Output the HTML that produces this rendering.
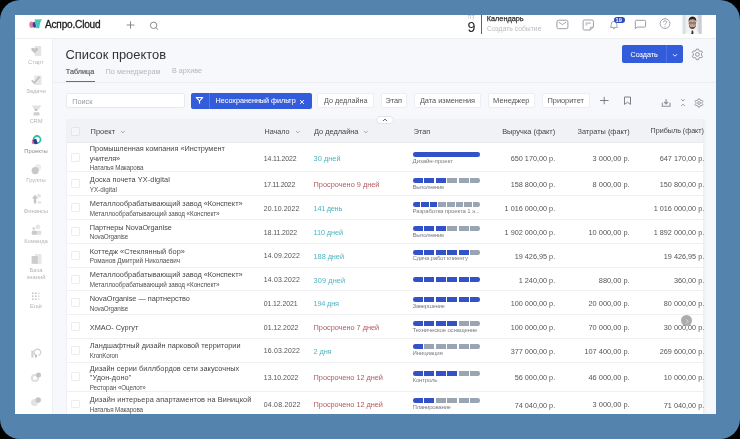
<!DOCTYPE html>
<html><head><meta charset="utf-8"><style>
html,body{margin:0;padding:0}
body{width:740px;height:439px;overflow:hidden;background:#000;position:relative;font-family:"Liberation Sans",sans-serif}
#frame{position:absolute;left:0;top:0;width:740px;height:439px;border-radius:20px;background:#5484ad}
#win{position:absolute;left:15px;top:15px;width:701px;height:399px;background:#fff;overflow:hidden}
.t{position:absolute;white-space:nowrap;line-height:normal}
#win{will-change:transform}
.r{position:absolute;display:block}
</style></head><body><div id="frame"></div><div id="win">
<div class="r" style="left:38.00px;top:23.00px;width:663.00px;height:376.00px;background:#f7f8fb"></div>
<div class="r" style="left:0.00px;top:23.00px;width:38.00px;height:376.00px;background:#fff;border-right:1px solid #eef0f3;box-sizing:border-box"></div>
<div class="r" style="left:0.00px;top:0.00px;width:701.00px;height:24.00px;background:#fff;border-bottom:1px solid #eceef1;box-sizing:border-box"></div>
<svg class="r" style="left:13.00px;top:3.00px" width="16" height="12" viewBox="0 0 16 12"><ellipse cx="3.5" cy="6.7" rx="2.2" ry="3.1" fill="#d97ea4"/><ellipse cx="6.7" cy="6.8" rx="2.0" ry="3.0" fill="#3a3f9c"/><path d="M6.4 1.6 L14 1.3 Q11.8 4 11.3 10.2 L8.8 10.2 Q8.2 5 6.4 1.6Z" fill="#45c7ad"/><path d="M7.6 3.4 Q9 6.5 9.2 10.2 L8.2 10.2 Q7.8 6.6 6.9 4.6Z" fill="#5fc7e6"/></svg>
<div class="t" style="left:30.00px;top:4.36px;font-size:10.1px;color:#222;font-weight:400;-webkit-text-stroke:0.3px #222;letter-spacing:-0.204px;">Аспро.Cloud</div>
<svg class="r" style="left:111.00px;top:5.80px" width="9" height="8" viewBox="0 0 9 8"><path d="M4.5 0.3V7.7M0.7 4H8.3" stroke="#7c7f86" stroke-width="0.9" fill="none"/></svg>
<svg class="r" style="left:134.00px;top:5.50px" width="10" height="9" viewBox="0 0 10 9"><circle cx="4.6" cy="4.3" r="3.2" stroke="#7c7f86" stroke-width="0.9" fill="none"/><path d="M6.9 6.6L9 8.6" stroke="#7c7f86" stroke-width="0.9"/></svg>
<div class="t" style="left:452.60px;top:-1.28px;font-size:5.5px;color:#bbb;font-weight:400;;">ПТ</div>
<div class="t" style="left:452.40px;top:3.76px;font-size:14.3px;color:#2a2a2a;font-weight:400;;">9</div>
<div class="r" style="left:465.50px;top:0.00px;width:1.40px;height:18.60px;background:#4f6784"></div>
<div class="t" style="left:471.80px;top:-1.00px;font-size:7.29px;color:#333;font-weight:400;-webkit-text-stroke:0.25px #333;">Календарь</div>
<div class="t" style="left:472.00px;top:10.05px;font-size:6.8px;color:#b9bcc2;font-weight:400;;">Создать событие</div>
<svg class="r" style="left:541.00px;top:4.00px" width="13" height="11" viewBox="0 0 13 11"><rect x="0.9" y="1.2" width="11" height="8.5" rx="1.6" stroke="#9a9da3" stroke-width="1" fill="none"/><path d="M2.6 3.1L6.4 5.6L10.2 3.1" stroke="#9a9da3" stroke-width="0.9" fill="none"/></svg>
<svg class="r" style="left:566.50px;top:3.50px" width="13" height="12" viewBox="0 0 13 12"><path d="M2.3 1H10.2Q11.4 1 11.4 2.2V8.2L8.2 11H2.3Q1.1 11 1.1 9.8V2.2Q1.1 1 2.3 1Z" stroke="#9a9da3" stroke-width="1" fill="none"/><path d="M3.5 4.1H8.9M3.5 5.9H5.3" stroke="#9a9da3" stroke-width="0.9"/><path d="M8.3 10.8V8.8Q8.3 8.2 8.9 8.2H11.2" stroke="#9a9da3" stroke-width="0.9" fill="none"/></svg>
<svg class="r" style="left:594.00px;top:4.00px" width="10" height="11" viewBox="0 0 10 11"><path d="M1.4 8.4Q2.3 7.4 2.3 5.3Q2.3 2.2 5 2.2Q7.7 2.2 7.7 5.3Q7.7 7.4 8.6 8.4Z" stroke="#9a9da3" stroke-width="0.9" fill="none"/><path d="M4 9.4Q5 10.6 6 9.4" stroke="#9a9da3" stroke-width="0.9" fill="none"/></svg>
<div class="r" style="left:598.70px;top:1.70px;width:11.30px;height:6.40px;background:#2c49bd;border-radius:4px"></div>
<div class="t" style="left:600.60px;top:2.13px;font-size:5.6px;color:#fff;font-weight:700;;">19</div>
<svg class="r" style="left:618.50px;top:3.50px" width="13" height="11" viewBox="0 0 13 11"><path d="M1.3 9.8V2.3Q1.3 1.3 2.3 1.3H10.6Q11.6 1.3 11.6 2.3V7.1Q11.6 8.1 10.6 8.1H3.1Z" stroke="#9a9da3" stroke-width="1" fill="none"/></svg>
<svg class="r" style="left:644.00px;top:3.00px" width="12" height="12" viewBox="0 0 12 12"><circle cx="6" cy="5.6" r="4.9" stroke="#9a9da3" stroke-width="0.95" fill="none"/><path d="M4.4 4.3Q4.4 2.8 6 2.8Q7.6 2.8 7.6 4.2Q7.6 5.1 6.6 5.6Q6 5.9 6 6.8" stroke="#9a9da3" stroke-width="0.9" fill="none"/><circle cx="6" cy="8.3" r="0.55" fill="#9a9da3"/></svg>
<svg class="r" style="left:666.50px;top:0.00px" width="20.5" height="19.3" viewBox="0 0 20.5 19.3"><defs><linearGradient id="ag" x1="0" x2="1"><stop offset="0" stop-color="#f2f3f4"/><stop offset="0.1" stop-color="#d5d8dc"/><stop offset="0.22" stop-color="#eef0f2"/><stop offset="0.7" stop-color="#eef0f2"/><stop offset="0.88" stop-color="#c3c7cc"/><stop offset="1" stop-color="#e8eaec"/></linearGradient></defs><rect x="0" y="0" width="20.5" height="19.3" fill="url(#ag)"/><path d="M3.5 19.3Q4.5 14.6 10.3 14.2Q16.1 14.6 17 19.3Z" fill="#f6f6f6"/><ellipse cx="10.4" cy="8.8" rx="3.7" ry="5.1" fill="#caa495"/><path d="M6.6 7.2Q6.2 1.5 10.5 1.4Q14.8 1.5 14.3 7.2Q13.6 4.1 10.4 4.2Q7.3 4.1 6.6 7.2Z" fill="#2b2222"/><path d="M6.9 9.6Q7.2 13.9 10.4 14.1Q13.6 13.9 13.9 9.6Q13.2 12.4 10.4 12.3Q7.6 12.4 6.9 9.6Z" fill="#5a4540"/><rect x="7.2" y="7.3" width="2.7" height="1.6" rx="0.5" fill="none" stroke="#3b3030" stroke-width="0.5"/><rect x="10.9" y="7.3" width="2.7" height="1.6" rx="0.5" fill="none" stroke="#3b3030" stroke-width="0.5"/><path d="M9.7 15.4L11.1 15.4L11.5 19.3L9.3 19.3Z" fill="#2b2f3a"/></svg>
<div class="t" style="left:-9.00px;width:60px;text-align:center;top:43.54px;font-size:5.8px;color:#b5b5b5">Старт</div>
<div class="t" style="left:-9.00px;width:60px;text-align:center;top:73.04px;font-size:5.8px;color:#b5b5b5">Задачи</div>
<div class="t" style="left:-9.00px;width:60px;text-align:center;top:102.74px;font-size:5.8px;color:#b5b5b5">CRM</div>
<div class="t" style="left:-9.00px;width:60px;text-align:center;top:133.04px;font-size:5.8px;color:#8a8a8a">Проекты</div>
<div class="t" style="left:-9.00px;width:60px;text-align:center;top:162.34px;font-size:5.8px;color:#b5b5b5">Группы</div>
<div class="t" style="left:-9.00px;width:60px;text-align:center;top:193.04px;font-size:5.8px;color:#b5b5b5">Финансы</div>
<div class="t" style="left:-9.00px;width:60px;text-align:center;top:222.54px;font-size:5.8px;color:#b5b5b5">Команда</div>
<div class="t" style="left:-9.00px;width:60px;text-align:center;top:251.94px;font-size:5.8px;color:#b5b5b5">База</div>
<div class="t" style="left:-9.00px;width:60px;text-align:center;top:258.74px;font-size:5.8px;color:#b5b5b5">знаний</div>
<div class="t" style="left:-9.00px;width:60px;text-align:center;top:288.34px;font-size:5.8px;color:#b5b5b5">Ещё</div>
<svg class="r" style="left:15.00px;top:30.00px" width="13" height="12" viewBox="0 0 13 12"><rect x="4.6" y="1" width="6.6" height="9.9" rx="0.8" fill="#e3e3e3"/><path d="M4.6 8.3L1.7 5.4Q0.8 4.4 1.5 3.3Q2.5 2.2 3.6 3L4.6 3.8L5.6 3Q6.7 2.2 7.7 3.3Q8.4 4.4 7.5 5.4Z" fill="#c4c4c4"/></svg>
<svg class="r" style="left:15.00px;top:59.00px" width="13" height="12" viewBox="0 0 13 12"><rect x="4.2" y="1.5" width="7.3" height="9.5" rx="0.8" fill="#e6e6e6"/><path d="M1.8 6.2L4.3 9L9.6 2.6" stroke="#c0c0c0" stroke-width="1.7" fill="none"/></svg>
<svg class="r" style="left:15.00px;top:89.00px" width="13" height="13" viewBox="0 0 13 13"><path d="M1.5 1.5H11.5L8 6.2V7H5V6.2Z" fill="#e2e2e2"/><circle cx="5.8" cy="5.7" r="1.3" fill="#c6c6c6"/><rect x="3.5" y="8.3" width="6" height="3.2" rx="0.6" fill="#cfcfcf"/></svg>
<svg class="r" style="left:15.00px;top:118.00px" width="13" height="13" viewBox="0 0 13 13"><circle cx="7" cy="6.5" r="3.5" stroke="#33c0a8" stroke-width="1.8" fill="none"/><circle cx="4" cy="8.9" r="2.3" fill="#d3789f"/><path d="M3 7.3Q4.2 5.6 6.3 6.1L7.7 10.4Q5.8 11.8 4.3 10.6Z" fill="#2e3a8f"/></svg>
<svg class="r" style="left:15.00px;top:148.00px" width="13" height="13" viewBox="0 0 13 13"><circle cx="8" cy="4.4" r="3.2" fill="#ececec"/><circle cx="5.2" cy="7.6" r="3.6" fill="#c8c8c8"/></svg>
<svg class="r" style="left:15.00px;top:178.00px" width="13" height="13" viewBox="0 0 13 13"><circle cx="9" cy="2.8" r="2" fill="#e4e4e4"/><path d="M5 1.8L8.2 5.6H6.2V10.6H3.8V5.6H1.8Z" fill="#c6c6c6"/><rect x="7.6" y="8.4" width="3.6" height="2" fill="#e2e2e2"/></svg>
<svg class="r" style="left:15.00px;top:208.00px" width="13" height="13" viewBox="0 0 13 13"><circle cx="8" cy="3.8" r="2.4" fill="#e6e6e6"/><circle cx="3.8" cy="5.5" r="1.3" fill="#cfcfcf"/><rect x="1.8" y="7.8" width="9.6" height="4" rx="1.2" fill="#e0e0e0"/><rect x="1.8" y="7.8" width="5" height="4" rx="1.2" fill="#cacaca"/></svg>
<svg class="r" style="left:15.00px;top:237.00px" width="13" height="13" viewBox="0 0 13 13"><rect x="5" y="2" width="6.5" height="10" fill="#e8e8e8"/><rect x="1.6" y="4" width="6.2" height="7.8" fill="#cdcdcd"/></svg>
<svg class="r" style="left:16.00px;top:277.00px" width="11" height="9" viewBox="0 0 11 9"><circle cx="1.8" cy="1.2" r="0.85" fill="#c4c4c4"/><circle cx="1.8" cy="4.2" r="0.85" fill="#c4c4c4"/><circle cx="1.8" cy="7.2" r="0.85" fill="#c4c4c4"/><circle cx="4.8" cy="1.2" r="0.85" fill="#c4c4c4"/><circle cx="4.8" cy="4.2" r="0.85" fill="#c4c4c4"/><circle cx="4.8" cy="7.2" r="0.85" fill="#c4c4c4"/><circle cx="7.8" cy="1.2" r="0.85" fill="#e0e0e0"/><circle cx="7.8" cy="4.2" r="0.85" fill="#e0e0e0"/><circle cx="7.8" cy="7.2" r="0.85" fill="#e0e0e0"/></svg>
<svg class="r" style="left:15.00px;top:332.00px" width="12" height="12" viewBox="0 0 12 12"><rect x="1.3" y="3.6" width="2.2" height="7" fill="#d2d2d2"/><path d="M5.6 8.2A3.3 3.3 0 1 1 8.4 8.6" stroke="#cfcfcf" stroke-width="1.2" fill="none"/><path d="M5 7.3L7.2 8L6.8 10.6L5 10.6Z" fill="#c2c2c2"/></svg>
<svg class="r" style="left:15.00px;top:357.00px" width="12" height="12" viewBox="0 0 12 12"><circle cx="5" cy="6" r="3.1" stroke="#dedede" stroke-width="2" fill="none"/><circle cx="8.5" cy="3" r="2.5" fill="#c3c3c3"/></svg>
<svg class="r" style="left:15.00px;top:381.00px" width="12" height="12" viewBox="0 0 12 12"><circle cx="4.5" cy="6.5" r="3.5" fill="#e2e2e2"/><circle cx="8.2" cy="4" r="2.7" fill="#c4c4c4"/></svg>
<div class="t" style="left:50.50px;top:31.73px;font-size:12.9px;color:#333;font-weight:400;;">Список проектов</div>
<div class="t" style="left:50.80px;top:51.85px;font-size:7.24px;color:#555;font-weight:400;-webkit-text-stroke:0.15px #555;">Таблица</div>
<div class="t" style="left:90.60px;top:51.55px;font-size:7.35px;color:#b4b7bd;font-weight:400;;">По менеджерам</div>
<div class="t" style="left:157.00px;top:51.93px;font-size:7.15px;color:#b4b7bd;font-weight:400;;">В архиве</div>
<div class="r" style="left:51.00px;top:65.60px;width:28.60px;height:1.10px;background:#56709a"></div>
<div class="r" style="left:38.00px;top:67.20px;width:663.00px;height:0.80px;background:#eceef2"></div>
<div class="r" style="left:607.20px;top:30.40px;width:60.60px;height:17.40px;background:#335cdc;border-radius:2px"></div>
<div class="r" style="left:651.20px;top:30.40px;width:0.70px;height:17.40px;background:#4d70e2"></div>
<div class="t" style="left:615.60px;top:35.55px;font-size:7.13px;color:#fff;font-weight:400;-webkit-text-stroke:0.05px #fff;">Создать</div>
<svg class="r" style="left:657.00px;top:37.50px" width="6" height="5" viewBox="0 0 6 5"><path d="M1 1.2L3 3.2L5 1.2" stroke="#fff" stroke-width="0.9" fill="none"/></svg>
<svg class="r" style="left:676.00px;top:33.00px" width="13" height="13" viewBox="0 0 13 13"><path d="M7.79 10.26L7.36 11.71L5.44 11.71L5.01 10.26L3.75 9.53L2.28 9.89L1.32 8.23L2.36 7.13L2.36 5.67L1.32 4.57L2.28 2.91L3.75 3.27L5.01 2.54L5.44 1.09L7.36 1.09L7.79 2.54L9.05 3.27L10.52 2.91L11.48 4.57L10.44 5.67L10.44 7.13L11.48 8.23L10.52 9.89L9.05 9.53Z" stroke="#8d9097" stroke-width="0.95" fill="none" stroke-linejoin="round"/><circle cx="6.4" cy="6.4" r="1.9" stroke="#8d9097" stroke-width="0.95" fill="none"/></svg>
<div class="r" style="left:51.20px;top:77.90px;width:118.60px;height:15.40px;background:#fff;border:1px solid #e8eaee;border-radius:2px;box-sizing:border-box"></div>
<div class="t" style="left:57.20px;top:81.89px;font-size:7.3px;color:#9a9da3;font-weight:400;;">Поиск</div>
<div class="r" style="left:175.60px;top:77.90px;width:121.30px;height:15.80px;background:#335cdc;border-radius:2px"></div>
<div class="r" style="left:194.40px;top:77.90px;width:0.70px;height:15.80px;background:#5577e6"></div>
<svg class="r" style="left:180.00px;top:81.00px" width="9" height="9" viewBox="0 0 9 9"><path d="M1.3 1.6H7.7L4.5 4.9Z" stroke="#fff" stroke-width="1.1" fill="#22389a" stroke-linejoin="round"/><path d="M4.5 4.9V7.6" stroke="#fff" stroke-width="1.2"/></svg>
<div class="t" style="left:200.60px;top:81.38px;font-size:7.2px;color:#fff;font-weight:400;-webkit-text-stroke:0.05px #fff;">Несохраненный фильтр</div>
<svg class="r" style="left:283.80px;top:83.50px" width="6" height="6" viewBox="0 0 6 6"><path d="M1 1L5 5M5 1L1 5" stroke="#fff" stroke-width="0.9"/></svg>
<div class="r" style="left:302.40px;top:77.80px;width:56.80px;height:15.50px;background:#fff;border:1px solid #eceef1;border-radius:2px;box-sizing:border-box"></div>
<div class="t" style="left:309.00px;top:81.46px;font-size:7.23px;color:#555;font-weight:400;;">До дедлайна</div>
<div class="r" style="left:365.50px;top:77.80px;width:26.50px;height:15.50px;background:#fff;border:1px solid #eceef1;border-radius:2px;box-sizing:border-box"></div>
<div class="t" style="left:370.50px;top:81.39px;font-size:7.3px;color:#555;font-weight:400;;">Этап</div>
<div class="r" style="left:399.00px;top:77.80px;width:67.00px;height:15.50px;background:#fff;border:1px solid #eceef1;border-radius:2px;box-sizing:border-box"></div>
<div class="t" style="left:404.90px;top:81.35px;font-size:7.35px;color:#555;font-weight:400;;">Дата изменения</div>
<div class="r" style="left:472.60px;top:77.80px;width:47.80px;height:15.50px;background:#fff;border:1px solid #eceef1;border-radius:2px;box-sizing:border-box"></div>
<div class="t" style="left:478.10px;top:81.21px;font-size:7.5px;color:#555;font-weight:400;;">Менеджер</div>
<div class="r" style="left:526.80px;top:77.80px;width:47.90px;height:15.50px;background:#fff;border:1px solid #eceef1;border-radius:2px;box-sizing:border-box"></div>
<div class="t" style="left:532.50px;top:81.32px;font-size:7.38px;color:#555;font-weight:400;;">Приоритет</div>
<svg class="r" style="left:583.50px;top:81.00px" width="11" height="9" viewBox="0 0 11 9"><path d="M5.2 0.8V8.2M1 4.5H9.5" stroke="#6f737a" stroke-width="0.9" fill="none"/></svg>
<svg class="r" style="left:607.50px;top:80.50px" width="9" height="10" viewBox="0 0 9 10"><path d="M1.5 1H7.5V8.4L4.5 6.3L1.5 8.4Z" stroke="#6f737a" stroke-width="0.9" fill="none" stroke-linejoin="round"/></svg>
<svg class="r" style="left:646.00px;top:83.00px" width="11" height="10" viewBox="0 0 11 10"><path d="M5.1 1V5.8M3 3.9L5.1 5.9L7.2 3.9" stroke="#8d9097" stroke-width="1.1" fill="none"/><path d="M1.3 4.8V8.2H9V4.8" stroke="#8d9097" stroke-width="1.1" fill="none"/></svg>
<svg class="r" style="left:664.50px;top:83.00px" width="6" height="10" viewBox="0 0 6 10"><path d="M1.2 1.2L3 3L4.8 1.2M1.2 8L3 6.2L4.8 8" stroke="#8d9097" stroke-width="0.9" fill="none"/></svg>
<svg class="r" style="left:679.00px;top:83.00px" width="10" height="10" viewBox="0 0 10 10"><path d="M6.08 8.01L5.74 9.13L4.26 9.13L3.92 8.01L2.93 7.44L1.79 7.71L1.05 6.42L1.85 5.57L1.85 4.43L1.05 3.58L1.79 2.29L2.93 2.56L3.92 1.99L4.26 0.87L5.74 0.87L6.08 1.99L7.07 2.56L8.21 2.29L8.95 3.58L8.15 4.43L8.15 5.57L8.95 6.42L8.21 7.71L7.07 7.44Z" stroke="#8d9097" stroke-width="0.9" fill="none" stroke-linejoin="round"/><circle cx="5" cy="5" r="1.4" stroke="#8d9097" stroke-width="0.9" fill="none"/></svg>
<div class="r" style="left:50.60px;top:104.00px;width:637.80px;height:295.00px;background:#fff;border-left:1px solid #eff0f3;box-sizing:border-box"></div>
<div class="r" style="left:688.40px;top:104.40px;width:3.60px;height:294.60px;background:linear-gradient(90deg,#eceef3,#f7f8fb)"></div>
<div class="r" style="left:50.60px;top:104.00px;width:637.80px;height:24.40px;background:#f1f2f6;border-bottom:1px solid #e8eaee;box-sizing:border-box"></div>
<div class="r" style="left:361.30px;top:101.10px;width:17.50px;height:8.20px;background:#fff;border-radius:5px;border:1px solid #e3e5ea;box-sizing:border-box"></div>
<svg class="r" style="left:367.00px;top:103.00px" width="6" height="4" viewBox="0 0 6 4"><path d="M1 3.1L3 1.1L5 3.1" stroke="#555" stroke-width="1" fill="none"/></svg>
<div class="r" style="left:56.20px;top:112.10px;width:9.00px;height:8.90px;background:#f4f5f8;border:1px solid #e2e4e8;border-radius:1.5px;box-sizing:border-box"></div>
<div class="t" style="left:75.60px;top:112.07px;font-size:7.44px;color:#444;font-weight:400;;">Проект</div>
<svg class="r" style="left:105.20px;top:115.00px" width="6" height="4" viewBox="0 0 6 4"><path d="M1 1L2.9 2.8L4.8 1" stroke="#999" stroke-width="0.8" fill="none"/></svg>
<div class="t" style="left:249.50px;top:112.48px;font-size:7.2px;color:#444;font-weight:400;;">Начало</div>
<svg class="r" style="left:279.50px;top:115.30px" width="6" height="4" viewBox="0 0 6 4"><path d="M1 1L2.9 2.8L4.8 1" stroke="#999" stroke-width="0.8" fill="none"/></svg>
<div class="t" style="left:299.00px;top:112.32px;font-size:7.38px;color:#444;font-weight:400;;">До дедлайна</div>
<svg class="r" style="left:347.80px;top:115.30px" width="6" height="4" viewBox="0 0 6 4"><path d="M1 1L2.9 2.8L4.8 1" stroke="#999" stroke-width="0.8" fill="none"/></svg>
<div class="t" style="left:398.80px;top:112.18px;font-size:7.2px;color:#444;font-weight:400;;">Этап</div>
<div class="t" style="right:160.80px;top:112.11px;font-size:7.39px;color:#444;font-weight:400;;">Выручка (факт)</div>
<div class="t" style="right:86.40px;top:112.15px;font-size:7.35px;color:#444;font-weight:400;;">Затраты (факт)</div>
<div class="t" style="right:12.00px;top:112.31px;font-size:7.17px;color:#444;font-weight:400;;">Прибыль (факт)</div>
<div class="r" style="left:50.60px;top:156.20px;width:637.80px;height:1.00px;background:#eff0f3"></div>
<div class="r" style="left:56.20px;top:138.20px;width:9.00px;height:8.90px;background:#fff;border:1px solid #ededf0;border-radius:1px;box-sizing:border-box"></div>
<div class="t" style="left:74.80px;top:128.97px;font-size:7.33px;color:#474747;font-weight:400;;letter-spacing:-0.005px;">Промышленная компания «Инструмент</div>
<div class="t" style="left:74.80px;top:138.67px;font-size:7.33px;color:#474747;font-weight:400;;letter-spacing:-0.104px;">учителя»</div>
<div class="t" style="left:74.80px;top:149.40px;font-size:6.3px;color:#525252;font-weight:400;;letter-spacing:-0.115px;">Наталья Макарова</div>
<div class="t" style="left:248.80px;top:139.56px;font-size:6.9px;color:#555;font-weight:400;;letter-spacing:-0.138px;">14.11.2022</div>
<div class="t" style="left:298.60px;top:139.15px;font-size:7.35px;color:#4fb3bf;font-weight:400;;letter-spacing:0.044px;">30 дней</div>
<div class="r" style="left:397.60px;top:136.80px;width:67.80px;height:4.90px;background:#3352c8;border-radius:2.3px"></div>
<div class="t" style="left:397.60px;top:141.58px;font-size:6.1px;color:#7c7f86;font-weight:400;;letter-spacing:-0.084px;">Дизайн-проект</div>
<div class="t" style="right:160.80px;top:139.20px;font-size:7.29px;color:#555;font-weight:400;;">650 170,00 р.</div>
<div class="t" style="right:86.40px;top:139.10px;font-size:7.4px;color:#555;font-weight:400;;">3 000,00 р.</div>
<div class="t" style="right:11.80px;top:139.22px;font-size:7.27px;color:#555;font-weight:400;;">647 170,00 р.</div>
<div class="r" style="left:50.60px;top:180.10px;width:637.80px;height:1.00px;background:#eff0f3"></div>
<div class="r" style="left:56.20px;top:164.35px;width:9.00px;height:8.90px;background:#fff;border:1px solid #ededf0;border-radius:1px;box-sizing:border-box"></div>
<div class="t" style="left:74.80px;top:159.87px;font-size:7.33px;color:#474747;font-weight:400;;letter-spacing:0.067px;">Доска почета YX-digital</div>
<div class="t" style="left:74.80px;top:170.60px;font-size:6.3px;color:#525252;font-weight:400;;letter-spacing:0.017px;">YX-digital</div>
<div class="t" style="left:248.80px;top:165.71px;font-size:6.9px;color:#555;font-weight:400;;letter-spacing:-0.282px;">17.11.2022</div>
<div class="t" style="left:298.60px;top:165.30px;font-size:7.35px;color:#b35a62;font-weight:400;;letter-spacing:-0.004px;">Просрочено 9 дней</div>
<div class="r" style="left:397.60px;top:162.95px;width:10.38px;height:4.90px;background:#3352c8;border-radius:2.3px 0 0 2.3px"></div>
<div class="r" style="left:409.08px;top:162.95px;width:10.38px;height:4.90px;background:#3352c8;"></div>
<div class="r" style="left:420.57px;top:162.95px;width:10.38px;height:4.90px;background:#3352c8;"></div>
<div class="r" style="left:432.05px;top:162.95px;width:10.38px;height:4.90px;background:#9ba4b2;"></div>
<div class="r" style="left:443.53px;top:162.95px;width:10.38px;height:4.90px;background:#9ba4b2;"></div>
<div class="r" style="left:455.02px;top:162.95px;width:10.38px;height:4.90px;background:#9ba4b2;border-radius:0 2.3px 2.3px 0"></div>
<div class="t" style="left:397.60px;top:167.73px;font-size:6.1px;color:#7c7f86;font-weight:400;;letter-spacing:-0.398px;">Выполнение</div>
<div class="t" style="right:160.80px;top:165.35px;font-size:7.29px;color:#555;font-weight:400;;">158 800,00 р.</div>
<div class="t" style="right:86.40px;top:165.25px;font-size:7.4px;color:#555;font-weight:400;;">8 000,00 р.</div>
<div class="t" style="right:11.80px;top:165.37px;font-size:7.27px;color:#555;font-weight:400;;">150 800,00 р.</div>
<div class="r" style="left:50.60px;top:204.00px;width:637.80px;height:1.00px;background:#eff0f3"></div>
<div class="r" style="left:56.20px;top:188.25px;width:9.00px;height:8.90px;background:#fff;border:1px solid #ededf0;border-radius:1px;box-sizing:border-box"></div>
<div class="t" style="left:74.80px;top:183.77px;font-size:7.33px;color:#474747;font-weight:400;;letter-spacing:-0.008px;">Металлообрабатывающий завод «Конспект»</div>
<div class="t" style="left:74.80px;top:194.50px;font-size:6.3px;color:#525252;font-weight:400;;letter-spacing:-0.047px;">Металлообрабатывающий завод «Конспект»</div>
<div class="t" style="left:248.80px;top:189.61px;font-size:6.9px;color:#555;font-weight:400;;letter-spacing:0.116px;">20.10.2022</div>
<div class="t" style="left:298.60px;top:189.20px;font-size:7.35px;color:#4fb3bf;font-weight:400;;letter-spacing:-0.274px;">141 день</div>
<div class="r" style="left:397.60px;top:186.85px;width:7.51px;height:4.90px;background:#3352c8;border-radius:2.3px 0 0 2.3px"></div>
<div class="r" style="left:406.21px;top:186.85px;width:7.51px;height:4.90px;background:#3352c8;"></div>
<div class="r" style="left:414.82px;top:186.85px;width:7.51px;height:4.90px;background:#3352c8;"></div>
<div class="r" style="left:423.44px;top:186.85px;width:7.51px;height:4.90px;background:#9ba4b2;"></div>
<div class="r" style="left:432.05px;top:186.85px;width:7.51px;height:4.90px;background:#9ba4b2;"></div>
<div class="r" style="left:440.66px;top:186.85px;width:7.51px;height:4.90px;background:#9ba4b2;"></div>
<div class="r" style="left:449.27px;top:186.85px;width:7.51px;height:4.90px;background:#9ba4b2;"></div>
<div class="r" style="left:457.89px;top:186.85px;width:7.51px;height:4.90px;background:#9ba4b2;border-radius:0 2.3px 2.3px 0"></div>
<div class="t" style="left:397.60px;top:191.63px;font-size:6.1px;color:#7c7f86;font-weight:400;;letter-spacing:-0.182px;">Разработка проекта 1 э...</div>
<div class="t" style="right:160.80px;top:189.25px;font-size:7.29px;color:#555;font-weight:400;;">1 016 000,00 р.</div>
<div class="t" style="right:11.80px;top:189.27px;font-size:7.27px;color:#555;font-weight:400;;">1 016 000,00 р.</div>
<div class="r" style="left:50.60px;top:228.00px;width:637.80px;height:1.00px;background:#eff0f3"></div>
<div class="r" style="left:56.20px;top:212.20px;width:9.00px;height:8.90px;background:#fff;border:1px solid #ededf0;border-radius:1px;box-sizing:border-box"></div>
<div class="t" style="left:74.80px;top:207.67px;font-size:7.33px;color:#474747;font-weight:400;;letter-spacing:-0.044px;">Партнеры NovaOrganise</div>
<div class="t" style="left:74.80px;top:218.40px;font-size:6.3px;color:#525252;font-weight:400;;letter-spacing:-0.159px;">NovaOrganise</div>
<div class="t" style="left:248.80px;top:213.56px;font-size:6.9px;color:#555;font-weight:400;;letter-spacing:-0.071px;">18.11.2022</div>
<div class="t" style="left:298.60px;top:213.15px;font-size:7.35px;color:#4fb3bf;font-weight:400;;letter-spacing:-0.125px;">110 дней</div>
<div class="r" style="left:397.60px;top:210.80px;width:10.38px;height:4.90px;background:#3352c8;border-radius:2.3px 0 0 2.3px"></div>
<div class="r" style="left:409.08px;top:210.80px;width:10.38px;height:4.90px;background:#3352c8;"></div>
<div class="r" style="left:420.57px;top:210.80px;width:10.38px;height:4.90px;background:#3352c8;"></div>
<div class="r" style="left:432.05px;top:210.80px;width:10.38px;height:4.90px;background:#9ba4b2;"></div>
<div class="r" style="left:443.53px;top:210.80px;width:10.38px;height:4.90px;background:#9ba4b2;"></div>
<div class="r" style="left:455.02px;top:210.80px;width:10.38px;height:4.90px;background:#9ba4b2;border-radius:0 2.3px 2.3px 0"></div>
<div class="t" style="left:397.60px;top:215.58px;font-size:6.1px;color:#7c7f86;font-weight:400;;letter-spacing:-0.398px;">Выполнение</div>
<div class="t" style="right:160.80px;top:213.20px;font-size:7.29px;color:#555;font-weight:400;;">1 902 000,00 р.</div>
<div class="t" style="right:86.40px;top:213.10px;font-size:7.4px;color:#555;font-weight:400;;">10 000,00 р.</div>
<div class="t" style="right:11.80px;top:213.22px;font-size:7.27px;color:#555;font-weight:400;;">1 892 000,00 р.</div>
<div class="r" style="left:50.60px;top:251.80px;width:637.80px;height:1.00px;background:#eff0f3"></div>
<div class="r" style="left:56.20px;top:236.10px;width:9.00px;height:8.90px;background:#fff;border:1px solid #ededf0;border-radius:1px;box-sizing:border-box"></div>
<div class="t" style="left:74.80px;top:231.67px;font-size:7.33px;color:#474747;font-weight:400;;letter-spacing:0.042px;">Коттедж «Стеклянный бор»</div>
<div class="t" style="left:74.80px;top:242.40px;font-size:6.3px;color:#525252;font-weight:400;;letter-spacing:0.024px;">Романов Дмитрий Николаевич</div>
<div class="t" style="left:248.80px;top:237.46px;font-size:6.9px;color:#555;font-weight:400;;letter-spacing:0.183px;">14.09.2022</div>
<div class="t" style="left:298.60px;top:237.05px;font-size:7.35px;color:#4fb3bf;font-weight:400;;letter-spacing:-0.060px;">188 дней</div>
<div class="r" style="left:397.60px;top:234.70px;width:10.38px;height:4.90px;background:#3352c8;border-radius:2.3px 0 0 2.3px"></div>
<div class="r" style="left:409.08px;top:234.70px;width:10.38px;height:4.90px;background:#3352c8;"></div>
<div class="r" style="left:420.57px;top:234.70px;width:10.38px;height:4.90px;background:#3352c8;"></div>
<div class="r" style="left:432.05px;top:234.70px;width:10.38px;height:4.90px;background:#3352c8;"></div>
<div class="r" style="left:443.53px;top:234.70px;width:10.38px;height:4.90px;background:#3352c8;"></div>
<div class="r" style="left:455.02px;top:234.70px;width:10.38px;height:4.90px;background:#9ba4b2;border-radius:0 2.3px 2.3px 0"></div>
<div class="t" style="left:397.60px;top:239.48px;font-size:6.1px;color:#7c7f86;font-weight:400;;letter-spacing:-0.249px;">Сдача работ клиенту</div>
<div class="t" style="right:160.80px;top:237.10px;font-size:7.29px;color:#555;font-weight:400;;">19 426,95 р.</div>
<div class="t" style="right:11.80px;top:237.12px;font-size:7.27px;color:#555;font-weight:400;;">19 426,95 р.</div>
<div class="r" style="left:50.60px;top:275.30px;width:637.80px;height:1.00px;background:#eff0f3"></div>
<div class="r" style="left:56.20px;top:259.75px;width:9.00px;height:8.90px;background:#fff;border:1px solid #ededf0;border-radius:1px;box-sizing:border-box"></div>
<div class="t" style="left:74.80px;top:255.47px;font-size:7.33px;color:#474747;font-weight:400;;letter-spacing:-0.008px;">Металлообрабатывающий завод «Конспект»</div>
<div class="t" style="left:74.80px;top:266.20px;font-size:6.3px;color:#525252;font-weight:400;;letter-spacing:-0.047px;">Металлообрабатывающий завод «Конспект»</div>
<div class="t" style="left:248.80px;top:261.11px;font-size:6.9px;color:#555;font-weight:400;;letter-spacing:0.183px;">14.03.2022</div>
<div class="t" style="left:298.60px;top:260.70px;font-size:7.35px;color:#4fb3bf;font-weight:400;;letter-spacing:0.097px;">309 дней</div>
<div class="r" style="left:397.60px;top:261.75px;width:10.38px;height:4.90px;background:#3352c8;border-radius:2.3px 0 0 2.3px"></div>
<div class="r" style="left:409.08px;top:261.75px;width:10.38px;height:4.90px;background:#3352c8;"></div>
<div class="r" style="left:420.57px;top:261.75px;width:10.38px;height:4.90px;background:#3352c8;"></div>
<div class="r" style="left:432.05px;top:261.75px;width:10.38px;height:4.90px;background:#3352c8;"></div>
<div class="r" style="left:443.53px;top:261.75px;width:10.38px;height:4.90px;background:#3352c8;"></div>
<div class="r" style="left:455.02px;top:261.75px;width:10.38px;height:4.90px;background:#3352c8;border-radius:0 2.3px 2.3px 0"></div>
<div class="t" style="right:160.80px;top:260.75px;font-size:7.29px;color:#555;font-weight:400;;">1 240,00 р.</div>
<div class="t" style="right:86.40px;top:260.65px;font-size:7.4px;color:#555;font-weight:400;;">880,00 р.</div>
<div class="t" style="right:11.80px;top:260.77px;font-size:7.27px;color:#555;font-weight:400;;">360,00 р.</div>
<div class="r" style="left:50.60px;top:299.20px;width:637.80px;height:1.00px;background:#eff0f3"></div>
<div class="r" style="left:56.20px;top:283.45px;width:9.00px;height:8.90px;background:#fff;border:1px solid #ededf0;border-radius:1px;box-sizing:border-box"></div>
<div class="t" style="left:74.80px;top:278.97px;font-size:7.33px;color:#474747;font-weight:400;;letter-spacing:-0.023px;">NovaOrganise — партнерство</div>
<div class="t" style="left:74.80px;top:289.70px;font-size:6.3px;color:#525252;font-weight:400;;letter-spacing:-0.159px;">NovaOrganise</div>
<div class="t" style="left:248.80px;top:284.81px;font-size:6.9px;color:#555;font-weight:400;;letter-spacing:-0.084px;">01.12.2021</div>
<div class="t" style="left:298.60px;top:284.40px;font-size:7.35px;color:#4fb3bf;font-weight:400;;letter-spacing:-0.206px;">194 дня</div>
<div class="r" style="left:397.60px;top:282.05px;width:10.38px;height:4.90px;background:#3352c8;border-radius:2.3px 0 0 2.3px"></div>
<div class="r" style="left:409.08px;top:282.05px;width:10.38px;height:4.90px;background:#3352c8;"></div>
<div class="r" style="left:420.57px;top:282.05px;width:10.38px;height:4.90px;background:#3352c8;"></div>
<div class="r" style="left:432.05px;top:282.05px;width:10.38px;height:4.90px;background:#3352c8;"></div>
<div class="r" style="left:443.53px;top:282.05px;width:10.38px;height:4.90px;background:#3352c8;"></div>
<div class="r" style="left:455.02px;top:282.05px;width:10.38px;height:4.90px;background:#3352c8;border-radius:0 2.3px 2.3px 0"></div>
<div class="t" style="left:397.60px;top:286.83px;font-size:6.1px;color:#7c7f86;font-weight:400;;letter-spacing:-0.340px;">Завершение</div>
<div class="t" style="right:160.80px;top:284.45px;font-size:7.29px;color:#555;font-weight:400;;">100 000,00 р.</div>
<div class="t" style="right:86.40px;top:284.35px;font-size:7.4px;color:#555;font-weight:400;;">20 000,00 р.</div>
<div class="t" style="right:11.80px;top:284.47px;font-size:7.27px;color:#555;font-weight:400;;">80 000,00 р.</div>
<div class="r" style="left:50.60px;top:322.70px;width:637.80px;height:1.00px;background:#eff0f3"></div>
<div class="r" style="left:56.20px;top:307.15px;width:9.00px;height:8.90px;background:#fff;border:1px solid #ededf0;border-radius:1px;box-sizing:border-box"></div>
<div class="t" style="left:74.80px;top:308.12px;font-size:7.33px;color:#474747;font-weight:400;;letter-spacing:0.002px;">ХМАО- Сургут</div>
<div class="t" style="left:248.80px;top:308.51px;font-size:6.9px;color:#555;font-weight:400;;letter-spacing:0.016px;">01.12.2022</div>
<div class="t" style="left:298.60px;top:308.10px;font-size:7.35px;color:#b35a62;font-weight:400;;letter-spacing:-0.017px;">Просрочено 7 дней</div>
<div class="r" style="left:397.60px;top:305.75px;width:10.38px;height:4.90px;background:#3352c8;border-radius:2.3px 0 0 2.3px"></div>
<div class="r" style="left:409.08px;top:305.75px;width:10.38px;height:4.90px;background:#3352c8;"></div>
<div class="r" style="left:420.57px;top:305.75px;width:10.38px;height:4.90px;background:#3352c8;"></div>
<div class="r" style="left:432.05px;top:305.75px;width:10.38px;height:4.90px;background:#3352c8;"></div>
<div class="r" style="left:443.53px;top:305.75px;width:10.38px;height:4.90px;background:#9ba4b2;"></div>
<div class="r" style="left:455.02px;top:305.75px;width:10.38px;height:4.90px;background:#9ba4b2;border-radius:0 2.3px 2.3px 0"></div>
<div class="t" style="left:397.60px;top:310.53px;font-size:6.1px;color:#7c7f86;font-weight:400;;letter-spacing:-0.203px;">Техническое оснащение</div>
<div class="t" style="right:160.80px;top:308.15px;font-size:7.29px;color:#555;font-weight:400;;">100 000,00 р.</div>
<div class="t" style="right:86.40px;top:308.05px;font-size:7.4px;color:#555;font-weight:400;;">70 000,00 р.</div>
<div class="t" style="right:11.80px;top:308.17px;font-size:7.27px;color:#555;font-weight:400;;">30 000,00 р.</div>
<div class="r" style="left:50.60px;top:346.50px;width:637.80px;height:1.00px;background:#eff0f3"></div>
<div class="r" style="left:56.20px;top:330.80px;width:9.00px;height:8.90px;background:#fff;border:1px solid #ededf0;border-radius:1px;box-sizing:border-box"></div>
<div class="t" style="left:74.80px;top:326.37px;font-size:7.33px;color:#474747;font-weight:400;;letter-spacing:0.005px;">Ландшафтный дизайн парковой территории</div>
<div class="t" style="left:74.80px;top:337.10px;font-size:6.3px;color:#525252;font-weight:400;;letter-spacing:-0.200px;">KronKoron</div>
<div class="t" style="left:248.80px;top:332.16px;font-size:6.9px;color:#555;font-weight:400;;letter-spacing:0.172px;">16.03.2022</div>
<div class="t" style="left:298.60px;top:331.75px;font-size:7.35px;color:#4fb3bf;font-weight:400;;letter-spacing:-0.116px;">2 дня</div>
<div class="r" style="left:397.60px;top:329.40px;width:10.38px;height:4.90px;background:#3352c8;border-radius:2.3px 0 0 2.3px"></div>
<div class="r" style="left:409.08px;top:329.40px;width:10.38px;height:4.90px;background:#9ba4b2;"></div>
<div class="r" style="left:420.57px;top:329.40px;width:10.38px;height:4.90px;background:#9ba4b2;"></div>
<div class="r" style="left:432.05px;top:329.40px;width:10.38px;height:4.90px;background:#9ba4b2;"></div>
<div class="r" style="left:443.53px;top:329.40px;width:10.38px;height:4.90px;background:#9ba4b2;"></div>
<div class="r" style="left:455.02px;top:329.40px;width:10.38px;height:4.90px;background:#9ba4b2;border-radius:0 2.3px 2.3px 0"></div>
<div class="t" style="left:397.60px;top:334.18px;font-size:6.1px;color:#7c7f86;font-weight:400;;letter-spacing:-0.166px;">Инициация</div>
<div class="t" style="right:160.80px;top:331.80px;font-size:7.29px;color:#555;font-weight:400;;">377 000,00 р.</div>
<div class="t" style="right:86.40px;top:331.70px;font-size:7.4px;color:#555;font-weight:400;;">107 400,00 р.</div>
<div class="t" style="right:11.80px;top:331.82px;font-size:7.27px;color:#555;font-weight:400;;">269 600,00 р.</div>
<div class="r" style="left:50.60px;top:375.70px;width:637.80px;height:1.00px;background:#eff0f3"></div>
<div class="r" style="left:56.20px;top:357.30px;width:9.00px;height:8.90px;background:#fff;border:1px solid #ededf0;border-radius:1px;box-sizing:border-box"></div>
<div class="t" style="left:74.80px;top:348.67px;font-size:7.33px;color:#474747;font-weight:400;;letter-spacing:0.045px;">Дизайн серии биллбордов сети закусочных</div>
<div class="t" style="left:74.80px;top:358.37px;font-size:7.33px;color:#474747;font-weight:400;;letter-spacing:0.090px;">"Удон-доно"</div>
<div class="t" style="left:74.80px;top:369.10px;font-size:6.3px;color:#525252;font-weight:400;;letter-spacing:-0.115px;">Ресторан «Оцелот»</div>
<div class="t" style="left:248.80px;top:358.66px;font-size:6.9px;color:#555;font-weight:400;;letter-spacing:0.016px;">13.10.2022</div>
<div class="t" style="left:298.60px;top:358.25px;font-size:7.35px;color:#b35a62;font-weight:400;;letter-spacing:-0.038px;">Просрочено 12 дней</div>
<div class="r" style="left:397.60px;top:355.90px;width:10.38px;height:4.90px;background:#3352c8;border-radius:2.3px 0 0 2.3px"></div>
<div class="r" style="left:409.08px;top:355.90px;width:10.38px;height:4.90px;background:#3352c8;"></div>
<div class="r" style="left:420.57px;top:355.90px;width:10.38px;height:4.90px;background:#3352c8;"></div>
<div class="r" style="left:432.05px;top:355.90px;width:10.38px;height:4.90px;background:#3352c8;"></div>
<div class="r" style="left:443.53px;top:355.90px;width:10.38px;height:4.90px;background:#9ba4b2;"></div>
<div class="r" style="left:455.02px;top:355.90px;width:10.38px;height:4.90px;background:#9ba4b2;border-radius:0 2.3px 2.3px 0"></div>
<div class="t" style="left:397.60px;top:360.68px;font-size:6.1px;color:#7c7f86;font-weight:400;;letter-spacing:-0.228px;">Контроль</div>
<div class="t" style="right:160.80px;top:358.30px;font-size:7.29px;color:#555;font-weight:400;;">56 000,00 р.</div>
<div class="t" style="right:86.40px;top:358.20px;font-size:7.4px;color:#555;font-weight:400;;">46 000,00 р.</div>
<div class="t" style="right:11.80px;top:358.32px;font-size:7.27px;color:#555;font-weight:400;;">10 000,00 р.</div>
<div class="r" style="left:56.20px;top:384.50px;width:9.00px;height:8.90px;background:#fff;border:1px solid #ededf0;border-radius:1px;box-sizing:border-box"></div>
<div class="t" style="left:74.80px;top:379.97px;font-size:7.33px;color:#474747;font-weight:400;;letter-spacing:0.111px;">Дизайн интерьера апартаментов на Виницкой</div>
<div class="t" style="left:74.80px;top:390.70px;font-size:6.3px;color:#525252;font-weight:400;;letter-spacing:-0.135px;">Наталья Макарова</div>
<div class="t" style="left:248.80px;top:385.86px;font-size:6.9px;color:#555;font-weight:400;;letter-spacing:0.238px;">04.08.2022</div>
<div class="t" style="left:298.60px;top:385.45px;font-size:7.35px;color:#b35a62;font-weight:400;;letter-spacing:-0.038px;">Просрочено 12 дней</div>
<div class="r" style="left:397.60px;top:383.10px;width:10.38px;height:4.90px;background:#3352c8;border-radius:2.3px 0 0 2.3px"></div>
<div class="r" style="left:409.08px;top:383.10px;width:10.38px;height:4.90px;background:#3352c8;"></div>
<div class="r" style="left:420.57px;top:383.10px;width:10.38px;height:4.90px;background:#9ba4b2;"></div>
<div class="r" style="left:432.05px;top:383.10px;width:10.38px;height:4.90px;background:#9ba4b2;"></div>
<div class="r" style="left:443.53px;top:383.10px;width:10.38px;height:4.90px;background:#9ba4b2;"></div>
<div class="r" style="left:455.02px;top:383.10px;width:10.38px;height:4.90px;background:#9ba4b2;border-radius:0 2.3px 2.3px 0"></div>
<div class="t" style="left:397.60px;top:387.88px;font-size:6.1px;color:#7c7f86;font-weight:400;;letter-spacing:-0.291px;">Планирование</div>
<div class="t" style="right:160.80px;top:385.50px;font-size:7.29px;color:#555;font-weight:400;;">74 040,00 р.</div>
<div class="t" style="right:86.40px;top:385.40px;font-size:7.4px;color:#555;font-weight:400;;">3 000,00 р.</div>
<div class="t" style="right:11.80px;top:385.52px;font-size:7.27px;color:#555;font-weight:400;;">71 040,00 р.</div>
<div class="r" style="left:665.50px;top:299.90px;width:11.80px;height:11.60px;background:rgba(140,140,140,0.72);border-radius:50%"></div>
<svg class="r" style="left:668.50px;top:302.50px" width="6" height="7" viewBox="0 0 6 7"><path d="M2 1.2L4.2 3.4L2 5.6" stroke="#ddd" stroke-width="0.9" fill="none"/></svg>
</div></body></html>
